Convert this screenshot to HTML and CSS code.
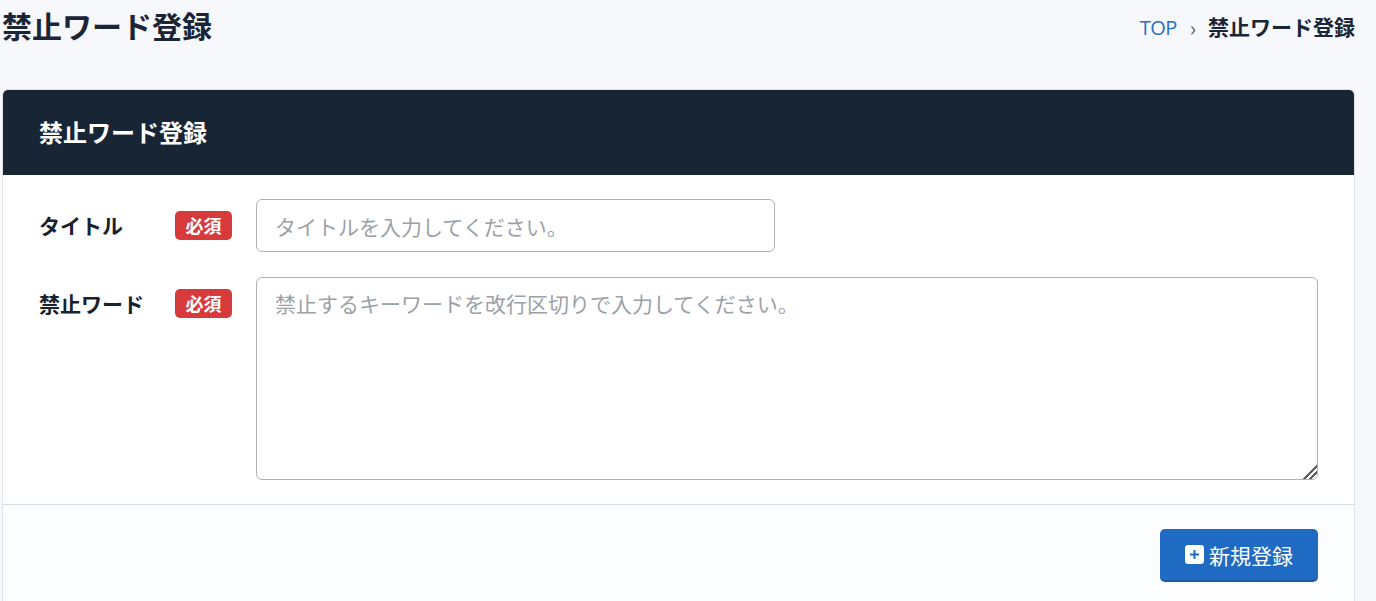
FILE: index.html
```html
<!DOCTYPE html>
<html lang="ja">
<head>
<meta charset="utf-8">
<title>禁止ワード登録</title>
<link rel="stylesheet" href="styles.css">
</head>
<body>
<div class="page">
  <header class="page-head">
    <h1 class="page-title">禁止ワード登録</h1>
    <nav class="crumbs">
      <a class="crumb-link" href="#">TOP</a>
      <span class="crumb-sep">›</span>
      <span class="crumb-current">禁止ワード登録</span>
    </nav>
  </header>
  <section class="card">
    <div class="card-head">禁止ワード登録</div>
    <div class="card-body">
      <div class="row">
        <label class="label">タイトル</label>
        <span class="badge">必須</span>
        <input class="control control-short" type="text" placeholder="タイトルを入力してください。">
      </div>
      <div class="row">
        <label class="label">禁止ワード</label>
        <span class="badge">必須</span>
        <textarea class="control control-area" placeholder="禁止するキーワードを改行区切りで入力してください。"></textarea>
      </div>
    </div>
    <div class="card-foot">
      <button class="btn" type="button">
        <svg class="btn-icon" width="19" height="19" viewBox="0 0 19 19"><rect x="0" y="0" width="19" height="19" rx="3" fill="#fff"/><path d="M9.5 5v9M5 9.5h9" stroke="#1f6bc4" stroke-width="2"/></svg>
        <span>新規登録</span>
      </button>
    </div>
  </section>
</div>
</body>
</html>
```
FILE: styles.css
```css
* { box-sizing: border-box; }
html, body { margin: 0; padding: 0; }
body {
  background: #f7f8fc;
  color: #19202e;
  font-family: "Noto Sans CJK JP", "Noto Sans", sans-serif;
  height: 601px;
  overflow: hidden;
}
.page { padding: 0 21px 0 2px; }
.page-head {
  display: flex;
  justify-content: space-between;
  align-items: center;
  height: 89px;
  padding-bottom: 35px;
}
.page-title { margin: 0 0 4px; font-size: 30px; font-weight: 700; line-height: 50px; color: #1a2535; }
.crumbs { display: flex; align-items: center; gap: 12px; font-size: 21px; line-height: 50px; }
.crumb-link { color: #2a6cc4; text-decoration: none; font-family: "Open Sans", sans-serif; font-size: 20px; letter-spacing: -0.6px; margin: 2px 1px 0 0; }
.crumb-sep { color: #555f6d; }
.crumb-current { font-weight: 700; color: #1a2535; margin-bottom: 2px; }
.card {
  background: #fff;
  border: 1px solid #dfe1e8;
  border-radius: 6px;
  overflow: hidden;
}
.card-head {
  background: #182535;
  color: #fff;
  font-size: 24px;
  font-weight: 700;
  height: 85px;
  line-height: 83px;
  padding-left: 36px;
}
.card-body { padding: 24px 36px 24px; display: flex; flex-direction: column; gap: 25px; }
.row { display: flex; align-items: flex-start; }
.label { width: 136px; font-size: 21px; font-weight: 700; line-height: 53px; color: #19202e; }
.row:last-child .label { line-height: 52px; }
.badge {
  width: 57px;
  height: 29px;
  margin: 12px 24px 0 0;
  border-radius: 5px;
  background: #d73a3a;
  color: #fff;
  font-size: 18px;
  font-weight: 700;
  line-height: 29px;
  text-align: center;
}
.control {
  display: block;
  border: 1px solid #b0b1b5;
  border-radius: 6px;
  background: #fff;
  padding: 0 18px;
  font-family: inherit;
  font-size: 21px;
  color: #19202e;
  outline: none;
}
.control::placeholder { color: #9ba1a8; opacity: 1; }
.control-short { width: 519px; height: 53px; }
.control-area { width: 1062px; height: 203px; padding-top: 9px; line-height: 32px; resize: both; }
.control-area::-webkit-resizer {
  background: linear-gradient(135deg, transparent 52%, #5f5f5f 52%, #5f5f5f 60%, transparent 60%, transparent 72%, #5f5f5f 72%, #5f5f5f 80%, transparent 80%);
}
.card-foot {
  background: #fcfdff;
  border-top: 1px solid #dcdde2;
  padding: 24px 36px 30px;
  display: flex;
  justify-content: flex-end;
}
.btn {
  display: flex;
  align-items: center;
  justify-content: center;
  gap: 5px;
  width: 158px;
  height: 53px;
  border: 0;
  border-bottom: 2px solid #1c5aa8;
  border-radius: 5px;
  background: #1f6bc4;
  color: #fff;
  font-family: inherit;
  font-size: 21px;
  padding: 0;
}
.btn-icon { display: block; }
```
